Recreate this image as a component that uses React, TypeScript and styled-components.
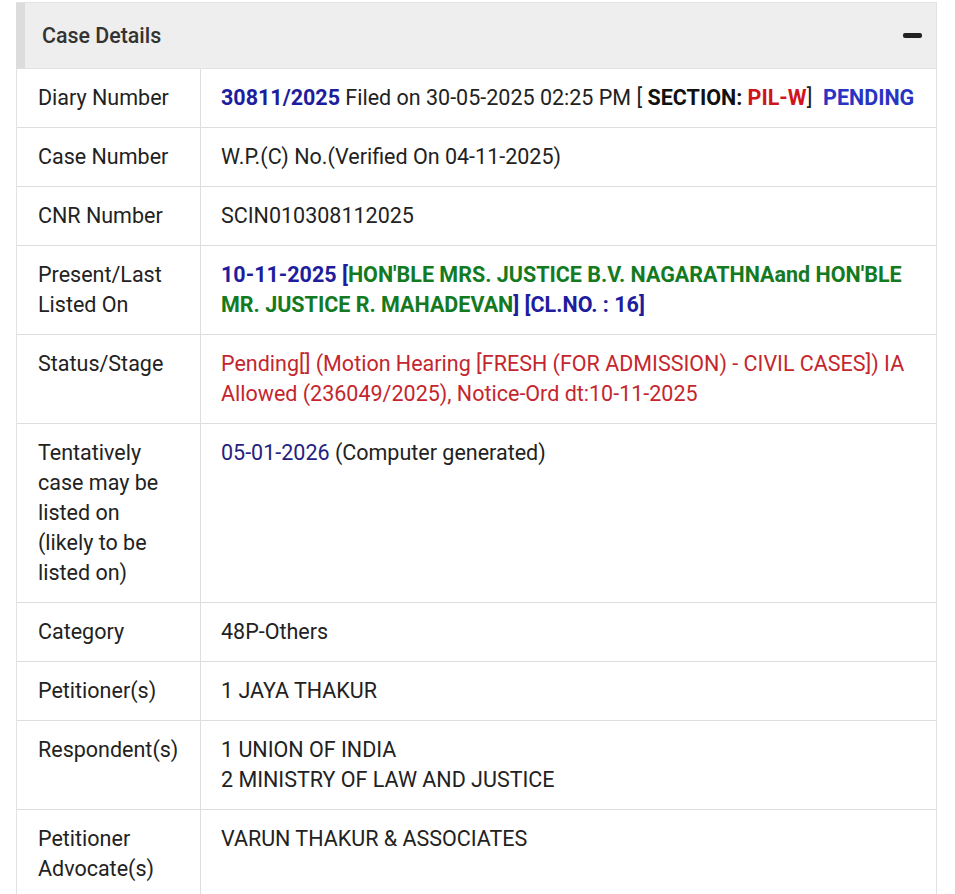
import React from 'react'
import styled, { createGlobalStyle } from 'styled-components'

const GlobalStyle = createGlobalStyle`
  body {
    margin: 0;
    background: #fff;
    font-family: Roboto, 'Liberation Sans', Arial, sans-serif;
  }
`

const Panel = styled.section`
  margin: 2px 0 0 16px;
  width: 920px;
  border-top: 1px solid #e2e2e2;
  border-right: 1px solid #e2e2e2;
`

const Header = styled.div`
  display: flex;
  align-items: center;
  justify-content: space-between;
  height: 66px;
  background: #eeeeee;
  border-left: 9px solid #dcdcdc;
  border-bottom: 1px solid #e2e2e2;
  padding: 0 14px 0 17px;
  box-sizing: border-box;
`

const Title = styled.h2`
  margin: 0;
  font-size: 21.4px;
  font-weight: 500;
  color: #333;
`

const Collapse = styled.span`
  display: block;
  width: 19px;
  height: 5px;
  border-radius: 2px;
  background: #222;
`

const Table = styled.table`
  width: 100%;
  border-collapse: collapse;
  font-size: 21.5px;
  line-height: 30px;
  color: #222;
`

const Row = styled.tr`
  border-bottom: 1px solid #dedede;
`

const Label = styled.td`
  width: 184px;
  box-sizing: border-box;
  padding: 14px 19px 14px 21px;
  vertical-align: top;
  border-left: 1px solid #e2e2e2;
  border-right: 1px solid #dedede;
`

const Value = styled.td`
  padding: 14px 14px 14px 20px;
  vertical-align: top;
`

const Strong = styled.b<{ $color?: string }>`
  font-weight: 700;
  color: ${p => p.$color || '#111'};
`

const Tint = styled.span<{ $color: string }>`
  color: ${p => p.$color};
`

const BLUE = '#1d1d9e'
const GREEN = '#147a22'
const RED = '#c4262e'

export default function App() {
  return (
    <>
      <GlobalStyle />
      <Panel>
        <Header>
          <Title>Case Details</Title>
          <Collapse />
        </Header>
        <Table>
          <tbody>
            <Row>
              <Label>Diary Number</Label>
              <Value>
                <Strong $color={BLUE}>30811/2025</Strong> Filed on 30-05-2025 02:25 PM [{' '}
                <Strong>SECTION:</Strong> <Strong $color="#d0141c">PIL-W</Strong>]&nbsp;{' '}
                <Strong $color="#2a34c2">PENDING</Strong>
              </Value>
            </Row>
            <Row>
              <Label>Case Number</Label>
              <Value>W.P.(C) No.(Verified On 04-11-2025)</Value>
            </Row>
            <Row>
              <Label>CNR Number</Label>
              <Value>SCIN010308112025</Value>
            </Row>
            <Row>
              <Label>Present/Last Listed On</Label>
              <Value>
                <Strong $color={BLUE}>10-11-2025 [</Strong>
                <Strong $color={GREEN}>
                  HON'BLE MRS. JUSTICE B.V. NAGARATHNAand HON'BLE MR. JUSTICE R. MAHADEVAN
                </Strong>
                <Strong $color={BLUE}>] [CL.NO. : 16]</Strong>
              </Value>
            </Row>
            <Row>
              <Label>Status/Stage</Label>
              <Value>
                <Tint $color={RED}>
                  Pending[] (Motion Hearing [FRESH (FOR ADMISSION) - CIVIL CASES]) IA Allowed
                  (236049/2025), Notice-Ord dt:10-11-2025
                </Tint>
              </Value>
            </Row>
            <Row>
              <Label>
                Tentatively case may be listed on
                <br />
                (likely to be listed on)
              </Label>
              <Value>
                <Tint $color="#23237f">05-01-2026</Tint> (Computer generated)
              </Value>
            </Row>
            <Row>
              <Label>Category</Label>
              <Value>48P-Others</Value>
            </Row>
            <Row>
              <Label>Petitioner(s)</Label>
              <Value>1 JAYA THAKUR</Value>
            </Row>
            <Row>
              <Label>Respondent(s)</Label>
              <Value>
                1 UNION OF INDIA
                <br />2 MINISTRY OF LAW AND JUSTICE
              </Value>
            </Row>
            <Row>
              <Label>Petitioner Advocate(s)</Label>
              <Value>VARUN THAKUR &amp; ASSOCIATES</Value>
            </Row>
          </tbody>
        </Table>
      </Panel>
    </>
  )
}
